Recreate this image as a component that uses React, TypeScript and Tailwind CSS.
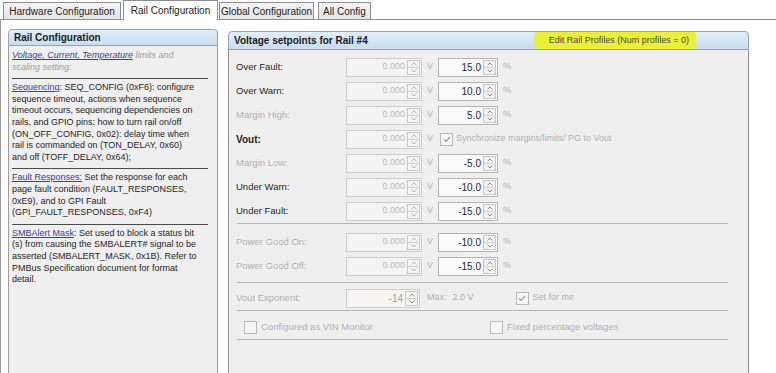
function Chevron({ up, color }: { up: boolean; color: string }) {
  return (
    <svg width="6" height="4" viewBox="0 0 6 4">
      <path d={up ? "M0.5 3.5 L3 1 L5.5 3.5" : "M0.5 0.5 L3 3 L5.5 0.5"} fill="none" stroke={color} strokeWidth="1" />
    </svg>
  );
}

function Spin({ value, box, text, arrow }: { value: string; box: string; text: string; arrow: string }) {
  return (
    <div className={`flex h-[19px] items-stretch border ${box}`}>
      <div className={`flex flex-1 items-center justify-end pr-[2px] ${text}`}>{value}</div>
      <div className="my-px mr-px flex w-[13px] flex-col border border-[#c8c8c8] bg-[#f3f3f3]">
        <div className="flex flex-1 items-center justify-center border-b border-[#d0d0d0]">
          <Chevron up color={arrow} />
        </div>
        <div className="flex flex-1 items-center justify-center">
          <Chevron up={false} color={arrow} />
        </div>
      </div>
    </div>
  );
}

function Check({ checked }: { checked?: boolean }) {
  return (
    <div className="flex h-[13px] w-[13px] items-center justify-center border border-[#b8b8b8] bg-[#f6f6f6]">
      {checked && (
        <svg width="8" height="7" viewBox="0 0 8 7">
          <path d="M1 3.5 L3 5.5 L7 1" fill="none" stroke="#9a9a9a" strokeWidth="1.2" />
        </svg>
      )}
    </div>
  );
}

const vBox = "w-[76px] border-[#cdcdcd] bg-[#f4f4f4]";
const pBox = "w-[60px] border-[#b4b4b4] bg-[#fbfbfb]";

function Row({ label, on, pct }: { label: string; on: boolean; pct: string }) {
  return (
    <div className="flex h-[24px] items-center">
      <div className={`w-[110px] text-[9.5px] ${on ? "text-[#262626]" : "text-[#b0b0b0]"}`}>{label}</div>
      <Spin value="0.000" box={vBox} text="text-[#b8b8b8]" arrow="#b0b0b0" />
      <span className="ml-[5px] w-[11px] text-[#b0b0b0]">V</span>
      <Spin value={pct} box={pBox} text="text-[#2a2a2a] text-[10px]" arrow="#8a8a8a" />
      <span className="ml-[5px] text-[#b0b0b0]">%</span>
    </div>
  );
}

function Sep() {
  return <div className="ml-[1px] h-px w-[491px] bg-[#b4b4b4]" />;
}

const tabBase = "flex items-center justify-center border border-b-0 border-[#8d9096] text-[10px] text-[#1e1e1e]";

export default function App() {
  return (
    <div className="h-[373px] w-[776px] overflow-hidden bg-white font-['Liberation_Sans',Arial,sans-serif] text-[9px]">
      {/* tabs */}
      <div className="flex h-[20px] items-end border-b border-[#8d9096] pl-[3px]">
        <div className={`${tabBase} h-[17px] w-[118px] bg-gradient-to-b from-[#f5f5f5] to-[#e4e4e4]`}>Hardware Configuration</div>
        <div className={`${tabBase} relative z-10 -mb-px ml-[2px] h-[20px] w-[95px] bg-white`}>Rail Configuration</div>
        <div className={`${tabBase} ml-px h-[17px] w-[95px] bg-gradient-to-b from-[#f5f5f5] to-[#e4e4e4]`}>Global Configuration</div>
        <div className={`${tabBase} ml-[4px] h-[17px] w-[53px] bg-gradient-to-b from-[#f5f5f5] to-[#e4e4e4]`}>All Config</div>
      </div>

      <div className="flex h-[353px] border-l border-[#9a9a9a] pl-[7px] pt-[9px]">
        {/* left help panel */}
        <div className="flex w-[210px] flex-col">
          <div className="h-[17px] rounded-t-[4px] border border-[#8fa3b9] bg-gradient-to-b from-[#e2eef9] to-[#c9dcef] pl-[5px] text-[10px] font-bold leading-[15px] text-[#1b1b1b]">
            Rail Configuration
          </div>
          <div className="flex-1 border-x border-[#9c9c9c] bg-[#efefef] pl-[3px] text-[#262626] leading-[11.6px]">
            <div className="pb-[5px] pt-[4px] whitespace-nowrap">
              <span className="italic text-[#3d3d9e] underline">Voltage, Current, Temperature</span>
              <span className="italic text-[#a0a0a0]"> limits and</span>
              <br />
              <span className="italic text-[#a0a0a0]">scaling setting:</span>
            </div>
            <div className="h-px w-[196px] bg-[#4a4a4a]" />
            <div className="pb-[5px] pt-[3px] whitespace-nowrap">
              <span className="text-[#3d3d9e] underline">Sequencing</span>: SEQ_CONFIG (0xF6): configure
              <br />
              sequence timeout, actions when sequence
              <br />
              timeout occurs, sequencing dependencies on
              <br />
              rails, and GPIO pins: how to turn rail on/off
              <br />
              (ON_OFF_CONFIG, 0x02): delay time when
              <br />
              rail is commanded on (TON_DELAY, 0x60)
              <br />
              and off (TOFF_DELAY, 0x64);
            </div>
            <div className="h-px w-[196px] bg-[#4a4a4a]" />
            <div className="pb-[5px] pt-[3px] whitespace-nowrap">
              <span className="text-[#3d3d9e] underline">Fault Responses:</span> Set the response for each
              <br />
              page fault condition (FAULT_RESPONSES,
              <br />
              0xE9), and to GPI Fault
              <br />
              (GPI_FAULT_RESPONSES, 0xF4)
            </div>
            <div className="h-px w-[196px] bg-[#4a4a4a]" />
            <div className="pt-[3px] whitespace-nowrap">
              <span className="text-[#3d3d9e] underline">SMBAlert Mask</span>: Set used to block a status bit
              <br />
              (s) from causing the SMBALERT# signal to be
              <br />
              asserted (SMBALERT_MASK, 0x1B). Refer to
              <br />
              PMBus Specification document for format
              <br />
              detail.
            </div>
          </div>
        </div>

        {/* right setpoints panel */}
        <div className="ml-[10px] mt-[2px] flex w-[521px] flex-col">
          <div className="flex h-[19px] items-center justify-between rounded-t-[4px] border border-[#8fa3b9] bg-gradient-to-b from-[#e2eef9] to-[#c9dcef] pl-[5px] pr-[52px]">
            <span className="text-[10px] font-bold text-[#1b1b1b]">Voltage setpoints for Rail #4</span>
            <span className="flex h-[17px] items-center rounded-[3px] bg-[#eaf03a] pl-[15px] pr-[7px] text-[#4a4a3c]">
              Edit Rail Profiles (Num profiles = 0)
            </span>
          </div>
          <div className="flex-1 border-x border-[#8e8e8e] bg-[#efefef] pl-[7px] pt-[5px]">
            <Row label="Over Fault:" on pct="15.0" />
            <Row label="Over Warn:" on pct="10.0" />
            <Row label="Margin High:" on={false} pct="5.0" />
            <div className="flex h-[24px] items-center">
              <div className="w-[110px] font-bold text-[#1e1e1e] text-[10px]">Vout:</div>
              <Spin value="0.000" box={vBox} text="text-[#b8b8b8]" arrow="#b0b0b0" />
              <span className="ml-[5px] w-[13px] text-[#b0b0b0]">V</span>
              <Check checked />
              <span className="ml-[3px] text-[#b0b0b0]">Synchronize margins/limits/ PG to Vout</span>
            </div>
            <Row label="Margin Low:" on={false} pct="-5.0" />
            <Row label="Under Warn:" on pct="-10.0" />
            <Row label="Under Fault:" on pct="-15.0" />
            <Sep />
            <div className="pt-[6px]">
              <Row label="Power Good On:" on={false} pct="-10.0" />
              <Row label="Power Good Off:" on={false} pct="-15.0" />
            </div>
            <div className="mt-[4px]">
              <Sep />
            </div>
            <div className="mt-[3px] flex h-[24px] items-center">
              <div className="w-[110px] text-[9.5px] text-[#b0b0b0]">Vout Exponent:</div>
              <Spin value="-14" box="w-[74px] border-[#cdcdcd] bg-[#f6f5ef]" text="text-[#9c9c9c] text-[10px]" arrow="#8a8a8a" />
              <span className="ml-[7px] text-[#b0b0b0]">Max:</span>
              <span className="ml-[6px] w-[63px] text-[#b0b0b0]">2.0 V</span>
              <Check checked />
              <span className="ml-[4px] text-[#b0b0b0]">Set for me</span>
            </div>
            <Sep />
            <div className="mt-[4px] flex h-[24px] items-center pl-[8px]">
              <Check />
              <span className="ml-[4px] w-[229px] text-[9.5px] text-[#b0b0b0]">Configured as VIN Monitor</span>
              <Check />
              <span className="ml-[4px] text-[9.5px] text-[#b0b0b0]">Fixed percentage voltages</span>
            </div>
            <Sep />
          </div>
        </div>
      </div>
    </div>
  );
}
